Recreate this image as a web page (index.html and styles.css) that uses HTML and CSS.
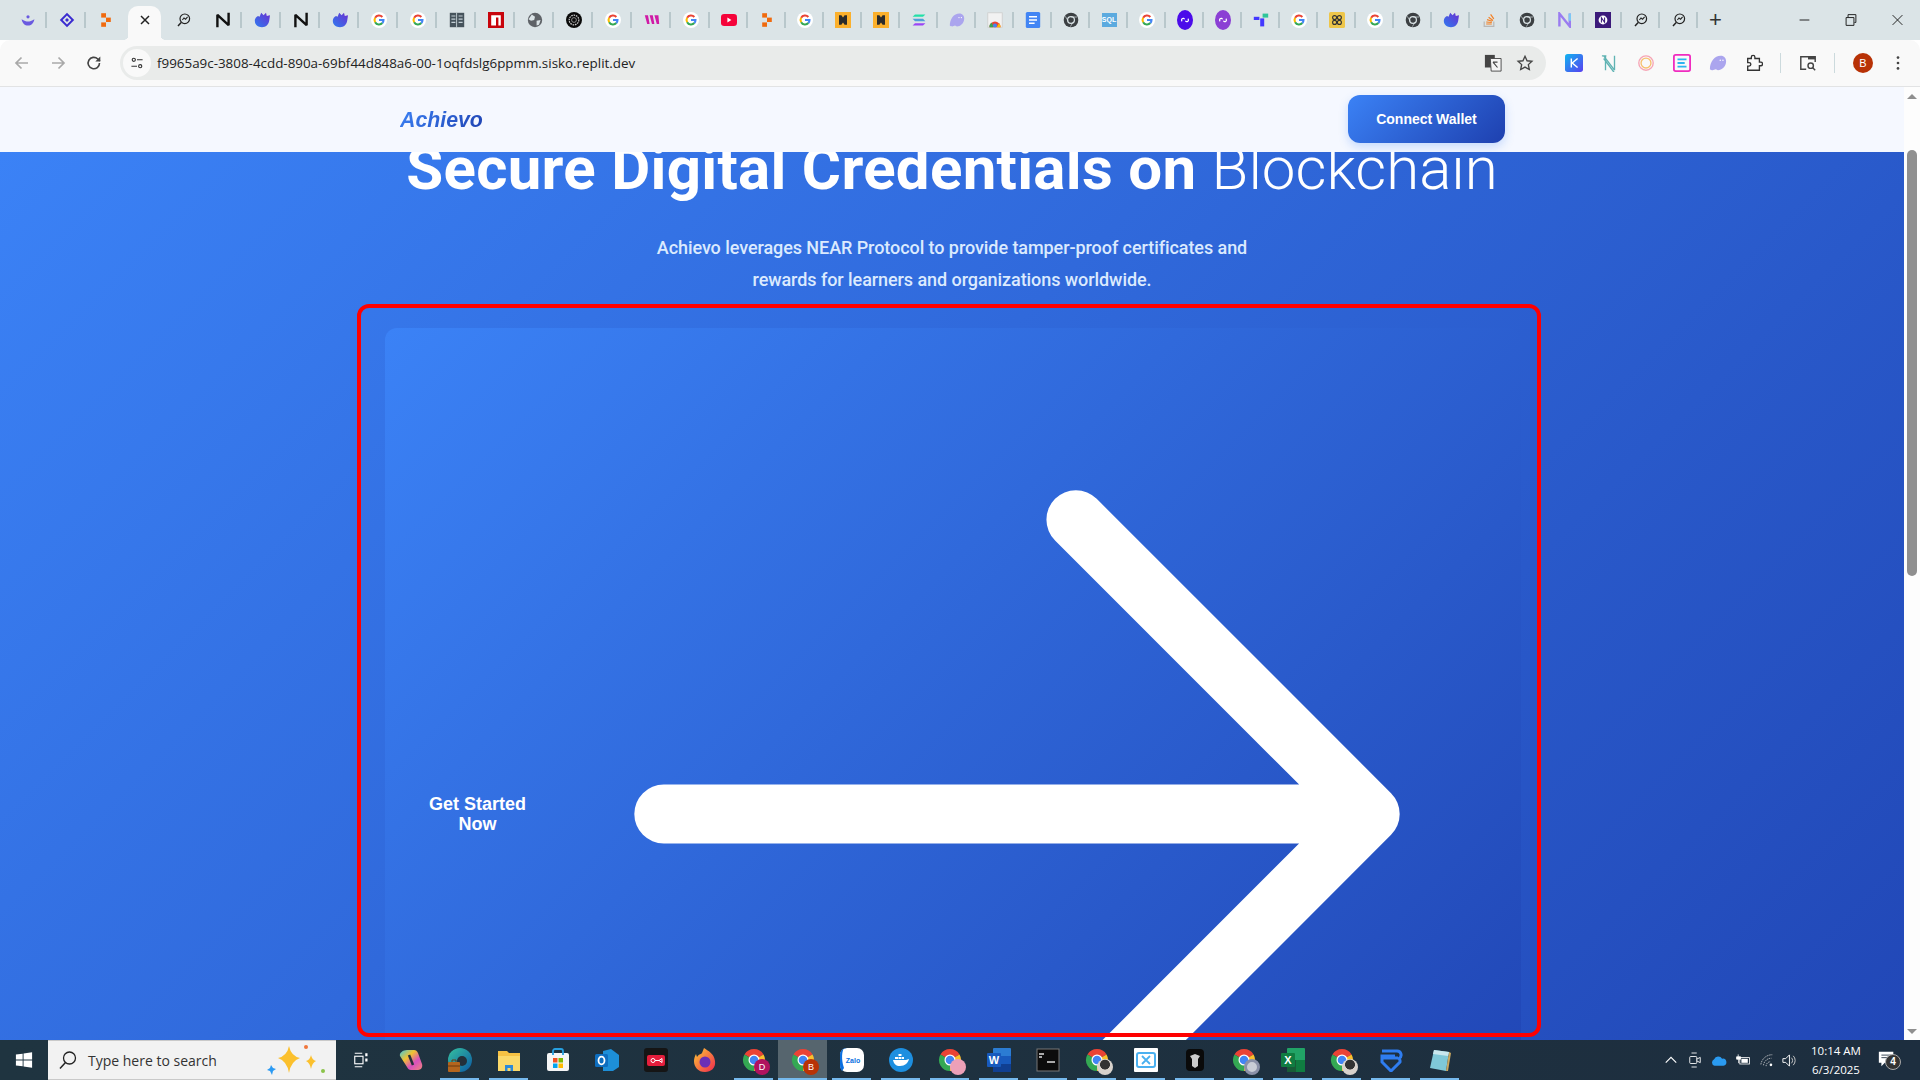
FILE: index.html
```html
<!DOCTYPE html>
<html lang="en">
<head>
    <meta charset="UTF-8">
    <title>Achievo</title>
    <link rel="stylesheet" href="styles.css">
</head>
<body>
<svg class="defs" width="0" height="0">
    <symbol id="g" viewBox="0 0 20 20">
        <circle cx="10" cy="10" r="10" fill="#fff"/>
        <path d="M14.2 6.2A5.6 5.6 0 0 0 5.2 7.2" fill="none" stroke="#ea4335" stroke-width="2.6"/>
        <path d="M5.2 7.2a5.6 5.6 0 0 0 0 5.6" fill="none" stroke="#fbbc05" stroke-width="2.6"/>
        <path d="M5.2 12.8a5.6 5.6 0 0 0 9 1" fill="none" stroke="#34a853" stroke-width="2.6"/>
        <path d="M14.2 13.8a5.6 5.6 0 0 0 1.4-3.8H10" fill="none" stroke="#4285f4" stroke-width="2.6"/>
    </symbol>
    <symbol id="near" viewBox="0 0 20 20">
        <path d="M3 19V3.500L17 16.500V1" fill="none" stroke="#111" stroke-width="3" stroke-linejoin="bevel"/>
    </symbol>
    <symbol id="comet" viewBox="0 0 20 20">
        <defs><linearGradient id="cometfill" x1="0" y1="1" x2="1" y2="0"><stop offset="0" stop-color="#2f7bf0"/><stop offset="1" stop-color="#6a2fd0"/></linearGradient></defs>
        <path d="M1 11c0-3 2-5 4-6l2 1 2-5 3 3 3-3 1 4 4-1-1 7c-1 5-4 8-9 8s-9-3-9-8z" fill="url(#cometfill)"/>
    </symbol>
    <symbol id="scan" viewBox="0 0 20 20">
        <circle cx="11" cy="8.500" r="6" fill="none" stroke="#222" stroke-width="1.500"/>
        <path d="M6.500 13L2.500 17.500" stroke="#222" stroke-width="1.800"/>
        <path d="M8 10l2-2.500 2 1.500 2.500-3" fill="none" stroke="#222" stroke-width="1.300"/>
    </symbol>
    <symbol id="fragment" viewBox="0 0 20 20">
        <rect x="4" y="1.500" width="6" height="5.500" fill="#f06a0e"/>
        <rect x="10" y="7" width="6" height="5.500" fill="#f06a0e"/>
        <rect x="4" y="13" width="6" height="5.500" fill="#f06a0e"/>
    </symbol>
    <symbol id="moo" viewBox="0 0 20 20">
        <rect width="20" height="20" fill="#fbb02c"/>
        <path d="M5 4h3l2 3 2-3h3v12h-3l-2-3-2 3H5z" fill="#2b2b2b"/>
    </symbol>
    <symbol id="ghost" viewBox="0 0 20 20">
        <path d="M1 17c0-8 5-15 12-15 4 0 6 3 6 6 0 6-5 10-9 10-1 0-1.500-1-2.500-1S5 18 4 18s-2 0-3-1z" fill="#aba5ee"/>
        <circle cx="12.500" cy="7" r=".8" fill="#fff"/><circle cx="15.500" cy="7" r=".8" fill="#fff"/>
    </symbol>
    <symbol id="chromedark" viewBox="0 0 24 24">
        <circle cx="12" cy="12" r="11" fill="#3c4043"/>
        <circle cx="12" cy="12" r="6" fill="#dbe4e7"/>
        <circle cx="12" cy="12" r="4.200" fill="#3c4043"/>
        <path d="M12 7.500h9M8 14L3.500 6.500M15.500 14.500L11 22" stroke="#dbe4e7" stroke-width="1"/>
    </symbol>
    <symbol id="chrome" viewBox="0 0 24 24">
        <path d="M12 12L2.470 6.500A11 11 0 0 1 21.530 6.500Z" fill="#ea4335"/>
        <path d="M12 12L21.530 6.500A11 11 0 0 1 12 23Z" fill="#fbc02d"/>
        <path d="M12 12V23A11 11 0 0 1 2.470 6.500Z" fill="#34a853"/>
        <circle cx="12" cy="12" r="5.500" fill="#fff"/>
        <circle cx="12" cy="12" r="4.300" fill="#4285f4"/>
    </symbol>
    <symbol id="polygon" viewBox="0 0 20 20">
        <path d="M6.500 11.500a2 2 0 1 1 3-2.500M13.500 8.500a2 2 0 1 1-3 2.500" fill="none" stroke="#fff" stroke-width="1.500"/>
    </symbol>
</svg>

<div class="browser">
    <div class="tabstrip">
        <div class="tab"><svg viewBox="0 0 20 20"><path d="M2 9c3 2 6 3 8 3s5-1 8-3c-1 5-4 8-8 8s-7-3-8-8z" fill="#6a5ae0"/><circle cx="10" cy="6" r="2" fill="#6a5ae0"/></svg></div>
        <div class="tab"><svg viewBox="0 0 20 20"><path d="M10 1l9 9-9 9-9-9z M10 4.500L4.500 10l5.500 5.500 5.500-5.500z M10 7.500l2.500 2.500-2.500 2.500L7.500 10z" fill="#3a2bd0" fill-rule="evenodd"/></svg></div>
        <div class="tab tab-plain"><svg><use href="#fragment"/></svg></div>
        <div class="tab tab-active"><svg viewBox="0 0 20 20"><path d="M5 5l10 10M15 5L5 15" stroke="#222" stroke-width="1.800"/></svg></div>
        <div class="tab tab-plain"><svg><use href="#scan"/></svg></div>
        <div class="tab"><svg><use href="#near"/></svg></div>
        <div class="tab"><svg><use href="#comet"/></svg></div>
        <div class="tab"><svg><use href="#near"/></svg></div>
        <div class="tab"><svg><use href="#comet"/></svg></div>
        <div class="tab"><svg><use href="#g"/></svg></div>
        <div class="tab"><svg><use href="#g"/></svg></div>
        <div class="tab"><svg viewBox="0 0 20 20"><rect x="1" y="1" width="18" height="18" fill="#46535c"/><path d="M9.500 1v18" stroke="#dbe4e7"/><path d="M3 5h5M3 9h5M3 13h5M12 5h5M12 9h5M12 13h5" stroke="#c4d0d6" stroke-width="1.500"/></svg></div>
        <div class="tab"><svg viewBox="0 0 20 20"><rect width="20" height="20" fill="#c8040c"/><path d="M4 17V4h12v13h-3V7h-3v10z" fill="#fff"/></svg></div>
        <div class="tab"><svg viewBox="0 0 20 20"><circle cx="10" cy="10" r="9" fill="#5f6368"/><path d="M6 3l4 3-1 4-4 1-3-2zM12 11l5-1-2 6-3 1z" fill="#dbe4e7"/></svg></div>
        <div class="tab"><svg viewBox="0 0 20 20"><circle cx="10" cy="10" r="10" fill="#0a0a0a"/><circle cx="10" cy="10" r="6" fill="none" stroke="#ccc" stroke-width="1.500" stroke-dasharray="2 1"/><circle cx="10" cy="10" r="3" fill="none" stroke="#aaa"/></svg></div>
        <div class="tab"><svg><use href="#g"/></svg></div>
        <div class="tab"><svg viewBox="0 0 20 20"><path d="M1 4h4l2 11H4zM7 4h4l2 11h-3zM13 4h5l1 11h-3z" fill="#d01aa6"/></svg></div>
        <div class="tab"><svg><use href="#g"/></svg></div>
        <div class="tab tab-narrow"><svg viewBox="0 0 20 20"><rect y="2.500" width="20" height="15" rx="4" fill="#f5033a"/><path d="M8 7l5 3-5 3z" fill="#fff"/></svg></div>
        <div class="tab tab-narrow"><svg><use href="#fragment"/></svg></div>
        <div class="tab tab-narrow"><svg><use href="#g"/></svg></div>
        <div class="tab tab-narrow"><svg><use href="#moo"/></svg></div>
        <div class="tab tab-narrow"><svg><use href="#moo"/></svg></div>
        <div class="tab tab-narrow"><svg viewBox="0 0 20 20"><path d="M5 3h13l-3 3H2z" fill="#22e0a8"/><path d="M2 8.500h13l3 3H5z" fill="#4f9fd8"/><path d="M5 14h13l-3 3H2z" fill="#9a45f5"/></svg></div>
        <div class="tab tab-narrow"><svg><use href="#ghost"/></svg></div>
        <div class="tab tab-narrow"><svg viewBox="0 0 20 20"><rect x="1" y="1" width="18" height="18" fill="#f2f2f2" stroke="#ccc"/><path d="M3 19a7 7 0 0 1 14 0z" fill="#ea4335"/><path d="M3 19a7 7 0 0 1 3-6l2 6z" fill="#34a853"/><path d="M17 19a7 7 0 0 0-2-5l-3 5z" fill="#fbbc05"/><circle cx="10" cy="17" r="2.500" fill="#4285f4"/></svg></div>
        <div class="tab tab-narrow"><svg viewBox="0 0 20 20"><rect x="1" width="18" height="20" rx="2" fill="#4285f4"/><path d="M5 6h10M5 10h10M5 14h7" stroke="#fff" stroke-width="1.800"/></svg></div>
        <div class="tab tab-narrow"><svg><use href="#chromedark"/></svg></div>
        <div class="tab tab-narrow"><div class="sql-badge">SQL</div></div>
        <div class="tab tab-narrow"><svg><use href="#g"/></svg></div>
        <div class="tab tab-narrow"><span class="favicon-round fav-indigo"><svg><use href="#polygon"/></svg></span></div>
        <div class="tab tab-narrow"><span class="favicon-round fav-violet"><svg><use href="#polygon"/></svg></span></div>
        <div class="tab tab-narrow"><svg viewBox="0 0 20 20"><rect x="1" y="6" width="7" height="4" fill="#4338ff"/><rect x="12" y="2" width="7" height="5" fill="#2ec59a"/><rect x="9" y="8" width="5" height="10" fill="#4338ff"/></svg></div>
        <div class="tab tab-narrow"><svg><use href="#g"/></svg></div>
        <div class="tab tab-narrow"><svg viewBox="0 0 20 20"><rect width="20" height="20" rx="2" fill="#eec64a"/><circle cx="7" cy="7" r="2.500" fill="none" stroke="#333" stroke-width="1.400"/><circle cx="13" cy="7" r="2.500" fill="none" stroke="#333" stroke-width="1.400"/><circle cx="7" cy="13" r="2.500" fill="none" stroke="#333" stroke-width="1.400"/><circle cx="13" cy="13" r="2.500" fill="none" stroke="#333" stroke-width="1.400"/></svg></div>
        <div class="tab tab-narrow"><svg><use href="#g"/></svg></div>
        <div class="tab tab-narrow"><svg><use href="#chromedark"/></svg></div>
        <div class="tab tab-narrow"><svg><use href="#comet"/></svg></div>
        <div class="tab tab-narrow"><svg viewBox="0 0 20 20"><path d="M4 12v6h12v-6" fill="none" stroke="#b9b7b5" stroke-width="1.500"/><path d="M6.500 15h7M6.500 12.500l7 .6M7.500 9.500l6.500 2M9.500 6.500l5.500 4M12 3l4 5.500" stroke="#f48024" stroke-width="1.500"/></svg></div>
        <div class="tab tab-narrow"><svg><use href="#chromedark"/></svg></div>
        <div class="tab tab-narrow"><svg viewBox="0 0 20 20"><path d="M3 18V2l13 16V2" fill="none" stroke="#9a7cf0" stroke-width="3"/><path d="M16 2v9" stroke="#7cc8f5" stroke-width="3"/></svg></div>
        <div class="tab tab-narrow"><svg viewBox="0 0 20 20"><rect width="20" height="20" fill="#3b1a7a"/><circle cx="10" cy="10" r="5.500" fill="#fff"/><path d="M8 13V7l4 6V7" fill="none" stroke="#3b1a7a" stroke-width="1.300"/></svg></div>
        <div class="tab tab-narrow"><svg><use href="#scan"/></svg></div>
        <div class="tab tab-narrow"><svg><use href="#scan"/></svg></div>
        <div class="new-tab">+</div>
        <div class="window-controls">
            <svg viewBox="0 0 48 40"><path d="M20 20h10" stroke="#222"/></svg>
            <svg viewBox="0 0 48 40"><path d="M19.500 17.500h8v8h-8zM21.500 17v-2.500h8v8H28" fill="none" stroke="#222"/></svg>
            <svg viewBox="0 0 48 40"><path d="M19 15l10 10M29 15L19 25" stroke="#222"/></svg>
        </div>
    </div>

    <div class="toolbar">
        <svg class="tool" viewBox="0 0 20 20"><path d="M16 10H4.500M9.500 4.500L4 10l5.500 5.500" fill="none" stroke="#a9a9a9" stroke-width="1.700"/></svg>
        <svg class="tool" viewBox="0 0 20 20"><path d="M4 10h11.500M10.500 4.500L16 10l-5.500 5.500" fill="none" stroke="#a9a9a9" stroke-width="1.700"/></svg>
        <svg class="tool" viewBox="0 0 20 20"><path d="M15.500 10a5.700 5.700 0 1 1-1.700-4L16 8" fill="none" stroke="#444" stroke-width="1.600"/><path d="M16.300 3.500v5h-5z" fill="#444"/></svg>
        <div class="omnibox">
            <span class="site-info"><svg viewBox="0 0 20 20"><circle cx="6" cy="6" r="2" fill="none" stroke="#333" stroke-width="1.400"/><path d="M10 6h7M3 14h7" stroke="#333" stroke-width="1.400"/><circle cx="14" cy="14" r="2" fill="none" stroke="#333" stroke-width="1.400"/></svg></span>
            <span class="url">f9965a9c-3808-4cdd-890a-69bf44d848a6-00-1oqfdslg6ppmm.sisko.replit.dev</span>
            <svg class="omni-icon" viewBox="0 0 20 20"><rect x="1" y="1" width="11" height="14" fill="#444"/><path d="M7 5h12v14H8z" fill="#f4f4f4" stroke="#444"/><path d="M10 9l5 6M15 9h-5" stroke="#444" stroke-width="1.300"/></svg>
            <svg class="omni-icon" viewBox="0 0 20 20"><path d="M10 2.500l2.300 5 5.400.6-4 3.700 1.100 5.400L10 14.500l-4.800 2.700 1.100-5.400-4-3.700 5.400-.6z" fill="none" stroke="#444" stroke-width="1.500"/></svg>
        </div>
        <div class="ext-row">
            <svg class="ext" viewBox="0 0 20 20"><defs><linearGradient id="kfill" x1="0" y1="0" x2="1" y2="1"><stop offset="0" stop-color="#0fb5f0"/><stop offset="1" stop-color="#5a3ff0"/></linearGradient></defs><rect width="20" height="20" rx="3" fill="url(#kfill)"/><path d="M7 5v10M14 5l-6 5 6 5" fill="none" stroke="#fff" stroke-width="1.600"/></svg>
            <svg class="ext" viewBox="0 0 20 20"><path d="M3 2l12 16M5 2v16M15 2v16M1 2h5M3 5l12 16" fill="none" stroke="#5fb3b3" stroke-width="1.500"/></svg>
            <svg class="ext" viewBox="0 0 20 20"><circle cx="10" cy="10" r="8" fill="none" stroke="#f6a5b5" stroke-width="1.500"/><circle cx="10" cy="10" r="5.500" fill="none" stroke="#f7c06f" stroke-width="1.500"/></svg>
            <svg class="ext" viewBox="0 0 20 20"><rect x="1" y="1" width="18" height="18" rx="2" fill="none" stroke="#f02cc0" stroke-width="2"/><path d="M5 6h10M5 10h8M5 14h10" stroke="#2cb5f0" stroke-width="2"/></svg>
            <svg class="ext"><use href="#ghost"/></svg>
            <svg class="ext" viewBox="0 0 20 20"><path d="M3 5h4V3.500a2 2 0 0 1 4 0V5h5v4h1.500a2 2 0 0 1 0 4H16v5H3v-4.500h1.500a2 2 0 0 0 0-4H3z" fill="none" stroke="#333" stroke-width="1.500"/></svg>
            <span class="tool-sep"></span>
            <svg class="ext" viewBox="0 0 20 20"><path d="M8 17H2V3h16v6" fill="none" stroke="#444" stroke-width="1.600"/><path d="M10 3h8v3h-8z" fill="#444"/><circle cx="13" cy="13" r="3" fill="none" stroke="#444" stroke-width="1.600"/><path d="M15 15l3 3" stroke="#444" stroke-width="1.600"/></svg>
            <span class="tool-sep"></span>
            <span class="avatar">B</span>
            <svg class="ext" viewBox="0 0 20 20"><circle cx="10" cy="4" r="1.500" fill="#444"/><circle cx="10" cy="10" r="1.500" fill="#444"/><circle cx="10" cy="16" r="1.500" fill="#444"/></svg>
        </div>
    </div>

    <div class="viewport">
        <div class="page">
            <nav class="navbar">
                <div class="logo">Achievo</div>
                <button class="connect-btn">Connect Wallet</button>
            </nav>
            <section class="hero">
                <h1>Secure Digital Credentials on <span class="thin">Blockchain</span></h1>
                <p>Achievo leverages NEAR Protocol to provide tamper-proof certificates and<br>rewards for learners and organizations worldwide.</p>
                <a class="cta">
                    <span class="cta-label">Get Started Now</span>
                    <svg class="cta-arrow" viewBox="0 0 24 24"><path d="M13.500 4.500L21 12m0 0l-7.500 7.500M21 12H3" fill="none" stroke="#fff" stroke-width="1.500" stroke-linecap="round" stroke-linejoin="round"/></svg>
                </a>
                <div class="red-outline"></div>
            </section>
        </div>
        <div class="scrollbar">
            <span class="arrow-up"></span>
            <span class="thumb"></span>
            <span class="arrow-down"></span>
        </div>
    </div>

    <div class="taskbar">
        <div class="start"><svg viewBox="0 0 20 20"><path d="M1 4l7.500-1v6.500H1zM9.500 2.800L19 1.500v8h-9.500zM1 10.500h7.500V17L1 16zM9.500 10.500H19v8L9.500 17.200z" fill="#fff"/></svg></div>
        <div class="search">
            <svg viewBox="0 0 20 20"><circle cx="11.500" cy="8" r="6" fill="none" stroke="#222" stroke-width="1.300"/><path d="M7.500 12.500L2 18.500" stroke="#222" stroke-width="1.500"/></svg>
            <span>Type here to search</span>
            <svg class="sparkle" viewBox="0 0 64 36"><path d="M24 4q2 10 11 12-9 3-11 15-2-12-11-15 9-2 11-12z" fill="#fbc02d"/><path d="M46 13q1 5 5 6-4 2-5 8-1-6-5-8 4-1 5-6z" fill="#fbc02d"/><path d="M6 23l2 3 3 1-3 2-1 4-2-4-3-1 3-2z" fill="#2b9af3"/><circle cx="41" cy="5" r="2" fill="#f0763c"/><circle cx="58" cy="29" r="2" fill="#8bc34a"/></svg>
        </div>
        <div class="task-view"><svg viewBox="0 0 24 24"><path d="M5 3h10M5 21h10" stroke="#fff" stroke-width="1.500"/><rect x="5" y="7" width="11" height="10" fill="none" stroke="#fff" stroke-width="1.500"/><rect x="19" y="10" width="3" height="4" fill="#fff"/><rect x="19" y="3" width="3" height="4" fill="#fff"/></svg></div>
        <div class="task-icons">
            <div class="app"><svg viewBox="0 0 24 24"><defs><linearGradient id="copilot" x1="0" y1="0" x2="1" y2="1"><stop offset="0" stop-color="#3ec8e0"/><stop offset=".35" stop-color="#f2c230"/><stop offset=".65" stop-color="#d84fc0"/><stop offset="1" stop-color="#f0867a"/></linearGradient></defs><path d="M8 2h7c2 0 3 1 4 3l4 11c1 3-1 6-4 6h-7c-2 0-3-1-4-3L1 8c-1-3 3-6 7-6z" fill="url(#copilot)"/><path d="M10 7l4 10" stroke="#23303a" stroke-width="2.500"/></svg></div>
            <div class="app running"><svg viewBox="0 0 24 24"><defs><linearGradient id="edge" x1="0" y1="0" x2="1" y2="1"><stop offset="0" stop-color="#35c1a0"/><stop offset="1" stop-color="#0c59a4"/></linearGradient></defs><circle cx="12" cy="12" r="12" fill="url(#edge)"/><circle cx="14" cy="13" r="5" fill="#23303a"/><rect x="0" y="14" width="12" height="10" rx="1" fill="#b5651d"/><path d="M4 14v-2h4v2M0 18h12" stroke="#6b3a10" stroke-width="1" fill="none"/></svg></div>
            <div class="app running"><svg viewBox="0 0 24 24"><path d="M1 3h9l2 2h11v18H1z" fill="#f6c244"/><path d="M1 8h22v15H1z" fill="#fbd96a"/><path d="M8 23v-6h8v6h-2.500v-3h-3v3z" fill="#2e8ad8"/></svg></div>
            <div class="app"><svg viewBox="0 0 24 24"><rect x="1" y="5" width="22" height="18" rx="2" fill="#f5f5f5"/><path d="M7 7V3a2 2 0 0 1 2-2h6a2 2 0 0 1 2 2v4" fill="none" stroke="#27a0e0" stroke-width="1.800"/><rect x="7" y="10" width="4.500" height="4.500" fill="#f25022"/><rect x="12.500" y="10" width="4.500" height="4.500" fill="#7fba00"/><rect x="7" y="15.500" width="4.500" height="4.500" fill="#00a4ef"/><rect x="12.500" y="15.500" width="4.500" height="4.500" fill="#ffb900"/></svg></div>
            <div class="app"><svg viewBox="0 0 24 24"><path d="M8 3l8-2 8 6v12l-6 4H8z" fill="#1d8fd8"/><rect x="0" y="6" width="13" height="13" rx="1.500" fill="#0e6ebf"/><ellipse cx="6.500" cy="12.500" rx="3" ry="3.800" fill="none" stroke="#fff" stroke-width="1.800"/></svg></div>
            <div class="app"><svg viewBox="0 0 24 24"><rect width="24" height="24" rx="3" fill="#151515"/><rect x="3" y="7" width="18" height="11" rx="2" fill="#e51e3c"/><circle cx="9" cy="12.500" r="2" fill="none" stroke="#fff"/><path d="M11 12.500h4l3-2v4l-3-2" fill="none" stroke="#fff"/></svg></div>
            <div class="app"><svg viewBox="0 0 24 24"><defs><linearGradient id="fox" x1="0" y1="0" x2="1" y2="1"><stop offset="0" stop-color="#ffcb32"/><stop offset="1" stop-color="#f0274f"/></linearGradient></defs><path d="M12 24C5 24 1 19 1 13c0-3 1-5 2-7l1 3c1-2 3-3 4-3l1-1 2-5c4 3 10 5 11 13 1 7-4 11-10 11z" fill="url(#fox)"/><circle cx="12" cy="14" r="5.500" fill="#6b2fb5"/></svg></div>
            <div class="app running"><svg><use href="#chrome"/></svg><span class="profile profile-d">D</span></div>
            <div class="app running active"><svg><use href="#chrome"/></svg><span class="profile profile-b">B</span></div>
            <div class="app running"><svg viewBox="0 0 24 24"><rect width="24" height="24" rx="7" fill="#fff"/><path d="M0 7c0-4 3-7 7-7H4C2 3 1 11 4 20l-2 3c-1-1-2-3-2-6z" fill="#0a6fe0"/><text x="13" y="15" class="zalo-text">Zalo</text></svg></div>
            <div class="app running"><svg viewBox="0 0 24 24"><circle cx="12" cy="12" r="12" fill="#1d8fe0"/><path d="M4 12h13c1 0 2-1 3-1-1 4-4 7-9 7-4 0-6-2-7-6z" fill="#fff"/><path d="M6 9h3v2H6zM9.500 9h3v2h-3zM13 9h2v2h-2zM9.500 6h3v2h-3z" fill="#fff"/></svg></div>
            <div class="app running"><svg><use href="#chrome"/></svg><span class="profile profile-pink"></span></div>
            <div class="app running"><svg viewBox="0 0 24 24"><rect x="6" width="18" height="24" rx="1" fill="#2b7cd3"/><rect x="6" y="16" width="18" height="8" fill="#103f91"/><rect x="6" y="8" width="18" height="8" fill="#185abd"/><rect y="5" width="14" height="14" rx="1" fill="#185abd"/><text x="7" y="16" class="office-text">W</text></svg></div>
            <div class="app running"><svg viewBox="0 0 24 24"><rect x="1" y="1" width="22" height="22" fill="#0c0c0c" stroke="#777"/><path d="M3 6h5M3 9h3M11 14h8" stroke="#ddd" stroke-width="1.500"/></svg></div>
            <div class="app running"><svg><use href="#chrome"/></svg><span class="profile profile-photo"></span></div>
            <div class="app running"><svg viewBox="0 0 24 24"><rect width="24" height="24" rx="1" fill="#fff"/><rect x="3" y="5" width="18" height="14" rx="2" fill="none" stroke="#4ab0f0" stroke-width="2"/><path d="M8 8l8 8M16 8l-8 8" stroke="#4ab0f0" stroke-width="1.800"/></svg></div>
            <div class="app running"><svg viewBox="0 0 24 24"><rect x="3" y="1" width="18" height="22" rx="4" fill="#0a0a0a"/><path d="M7 8l5-2 5 2-2 3v7l-3 2-3-2v-7z" fill="#ccc"/></svg></div>
            <div class="app running"><svg><use href="#chrome"/></svg><span class="profile profile-clock"></span></div>
            <div class="app running"><svg viewBox="0 0 24 24"><rect x="6" width="18" height="24" rx="1" fill="#21a366"/><rect x="15" y="12" width="9" height="12" fill="#107c41"/><rect x="6" y="12" width="9" height="12" fill="#185c37"/><rect y="5" width="14" height="14" rx="1" fill="#107c41"/><text x="7" y="16" class="office-text">X</text></svg></div>
            <div class="app running"><svg><use href="#chrome"/></svg><span class="profile profile-photo"></span></div>
            <div class="app running"><svg viewBox="0 0 24 24"><path d="M3 3h15a4 4 0 0 1 2 7.500 4 4 0 0 1 1 3.500L12 23 3 14V8h13" fill="none" stroke="#2f7df0" stroke-width="3"/><path d="M3 10h16" stroke="#2f7df0" stroke-width="3"/></svg></div>
            <div class="app running"><svg viewBox="0 0 24 24"><path d="M6 2l15 2-3 19-16-3z" fill="#7fc8d8"/><path d="M21 4l2 1-3 18h-2z" fill="#caa860"/><path d="M6 2l15 2-1 4L5 6z" fill="#c9e7ee"/></svg></div>
        </div>
        <div class="tray">
            <svg class="tray-icon tray-chevron" viewBox="0 0 16 16"><path d="M2 11l6-6 6 6" fill="none" stroke="#fff" stroke-width="1.300"/></svg>
            <svg class="tray-icon tray-cam" viewBox="0 0 16 20"><rect x="2" y="6" width="8" height="8" rx="1" fill="none" stroke="#fff"/><path d="M10 9l4-2v6l-4-2M4 2h6M4 18h6" fill="none" stroke="#fff"/></svg>
            <svg class="tray-icon tray-cloud" viewBox="0 0 18 12"><path d="M4 12a4 4 0 0 1-.5-7.500A5 5 0 0 1 12.500 4 4 4 0 0 1 14 12z" fill="#2a9af0"/></svg>
            <svg class="tray-icon tray-batt" viewBox="0 0 20 16"><path d="M4 1v3M2 4h5v3H2zM4.500 7v5" stroke="#fff" fill="#fff"/><rect x="6" y="5" width="12" height="8" fill="none" stroke="#fff"/><rect x="8" y="6.500" width="8" height="5" fill="#fff"/></svg>
            <svg class="tray-icon tray-wifi" viewBox="0 0 16 16"><path d="M1 13a13 13 0 0 1 13-11M4 14a9 9 0 0 1 9-8M7 15a5 5 0 0 1 5-5" fill="none" stroke="#ddd" stroke-dasharray="1.500 1"/><circle cx="12.500" cy="13.500" r="1.500" fill="#fff"/></svg>
            <svg class="tray-icon tray-vol" viewBox="0 0 16 16"><path d="M2 6h3l4-4v12l-4-4H2z" fill="none" stroke="#fff"/><path d="M11 5a4 4 0 0 1 0 6M13 3a7 7 0 0 1 0 10" fill="none" stroke="#ccc"/></svg>
            <div class="clock"><span>10:14 AM</span><span>6/3/2025</span></div>
            <div class="notify">
                <svg viewBox="0 0 20 20"><path d="M1 2h17v13H8l-4 4v-4H1z" fill="#fff"/><path d="M4 6h11M4 9h11" stroke="#1c2c3c"/></svg>
                <span class="notify-count">4</span>
            </div>
        </div>
    </div>
</div>
</body>
</html>
```

FILE: styles.css
```css
* {
    box-sizing: border-box;
}

body {
    margin: 0;
    font-family: "Liberation Sans", Arial, sans-serif;
    overflow: hidden;
}

.defs {
    position: absolute;
}

.browser {
    width: 1920px;
    height: 1080px;
    display: flex;
    flex-direction: column;
    overflow: hidden;
}

/* tab strip */
.tabstrip {
    height: 40px;
    flex: none;
    display: flex;
    align-items: center;
    padding-left: 8px;
    background-color: #dbe4e7;
}

.tab {
    position: relative;
    width: 39px;
    height: 40px;
    flex: none;
    display: flex;
    align-items: center;
    justify-content: center;
}

.tab-narrow {
    width: 38px;
}

.tab::after {
    content: "";
    position: absolute;
    right: 0;
    top: 12px;
    width: 2px;
    height: 16px;
    background-color: #b8c7cb;
}

.tab-active::after,
.tab-plain::after {
    display: none;
}

.tab svg {
    width: 16px;
    height: 16px;
}

.tab-active {
    height: 34px;
    width: 33px;
    margin: 6px 3px 0;
    padding-bottom: 6px;
    background-color: #f9f9f9;
    border-radius: 10px 10px 0 0;
}

.tab-active::before {
    content: "";
    position: absolute;
    left: -6px;
    right: -6px;
    bottom: 0;
    height: 8px;
    background: radial-gradient(circle at 0 0, #dbe4e7 8px, #f9f9f9 8.5px) left / 6px 8px no-repeat,
                radial-gradient(circle at 100% 0, #dbe4e7 8px, #f9f9f9 8.5px) right / 6px 8px no-repeat;
}

.sql-badge {
    width: 15px;
    height: 14px;
    font-size: 7px;
    font-weight: bold;
    line-height: 14px;
    text-align: center;
    color: #fff;
    background-color: #5baadf;
}

.favicon-round {
    width: 16px;
    height: 20px;
    border-radius: 50%;
    display: flex;
    align-items: center;
    justify-content: center;
}

.fav-indigo {
    background-color: #4b0bea;
}

.fav-violet {
    background-color: #8b3fd4;
}

.new-tab {
    width: 35px;
    text-align: center;
    font-size: 22px;
    line-height: 40px;
    color: #333;
}

.window-controls {
    margin-left: auto;
    margin-right: -1px;
    display: flex;
}

.window-controls svg {
    width: 47px;
    height: 40px;
}

/* toolbar */
.toolbar {
    height: 47px;
    flex: none;
    display: flex;
    align-items: center;
    padding: 0 0 1px 4px;
    background-color: #f9f9f9;
    border-bottom: 1px solid #e2e3e4;
    border-radius: 10px 10px 0 0;
}

.tool {
    width: 20px;
    height: 20px;
    margin: 0 8px;
    flex: none;
}

.omnibox {
    width: 1426px;
    height: 34px;
    margin-left: 8px;
    flex: none;
    display: flex;
    align-items: center;
    padding: 0 12px 0 3px;
    border-radius: 17px;
    background-color: #e9ebea;
}

.site-info {
    width: 28px;
    height: 28px;
    border-radius: 50%;
    background-color: #f9f9f9;
    display: flex;
    align-items: center;
    justify-content: center;
}

.site-info svg {
    width: 16px;
    height: 16px;
}

.url {
    margin-left: 6px;
    flex: 1;
    font-family: "Open Sans", sans-serif;
    font-size: 13.4px;
    color: #222;
}

.omni-icon {
    width: 18px;
    height: 18px;
    margin-left: 14px;
}

.ext-row {
    display: flex;
    align-items: center;
    margin-left: 19px;
}

.ext {
    width: 18px;
    height: 18px;
    margin-right: 18px;
    flex: none;
}

.tool-sep {
    width: 1px;
    height: 20px;
    margin-right: 18px;
    margin-left: -1px;
    background-color: #ccdadd;
}

.avatar {
    width: 20px;
    height: 20px;
    margin-right: 16px;
    border-radius: 50%;
    background-color: #b83206;
    color: #fff;
    font-size: 11px;
    line-height: 20px;
    text-align: center;
}

/* page */
.viewport {
    flex: 1;
    min-height: 0;
    display: flex;
}

.page {
    flex: 1;
    min-width: 0;
    display: flex;
    flex-direction: column;
}

.navbar {
    height: 65px;
    flex: none;
    display: flex;
    align-items: center;
    justify-content: space-between;
    padding: 0 399px 0 400px;
    background-color: #f5f8ff;
}

.logo {
    margin-top: 1px;
    font-size: 21.3px;
    font-weight: bold;
    font-style: italic;
    background: linear-gradient(135deg, #3b82f6, #1e40af);
    -webkit-background-clip: text;
    background-clip: text;
    color: transparent;
}

.connect-btn {
    width: 157px;
    height: 48px;
    margin-bottom: 1px;
    border: 0;
    border-radius: 12px;
    font-family: "Liberation Sans", Arial, sans-serif;
    font-size: 14px;
    font-weight: bold;
    color: #fff;
    background: linear-gradient(135deg, #3b82f6, #1e40af);
    box-shadow: 0 4px 10px rgba(59, 130, 246, 0.25);
}

.hero {
    position: relative;
    flex: 1;
    min-height: 0;
    overflow: hidden;
    display: flex;
    flex-direction: column;
    align-items: center;
    background: linear-gradient(135deg, #3b82f6, #1e40af 112%);
    color: #fff;
}

.hero h1 {
    margin: -16px 0 0;
    font-family: Roboto, sans-serif;
    font-size: 60px;
    line-height: 66px;
    font-weight: 700;
    letter-spacing: 0.3px;
    white-space: nowrap;
}

.thin {
    font-weight: 300;
    letter-spacing: 0;
}

.hero p {
    margin: 30px 0 0;
    font-family: Roboto, sans-serif;
    font-size: 18px;
    line-height: 32px;
    font-weight: 500;
    letter-spacing: -0.07px;
    text-align: center;
    color: #dbeafe;
}

.cta {
    width: 1136px;
    flex: none;
    margin: 32px 0 0 2px;
    padding: 15px 32px;
    display: flex;
    align-items: center;
    gap: 8px;
    border-radius: 12px;
    background: linear-gradient(135deg, #3b82f6, #1e40af);
}

.cta-label {
    width: 121px;
    flex: none;
    font-size: 18px;
    line-height: 20px;
    font-weight: bold;
    text-align: center;
    color: #fff;
}

.cta-arrow {
    width: 942px;
    height: 942px;
    flex: none;
}

.red-outline {
    position: absolute;
    left: 357px;
    top: 152px;
    width: 1184px;
    height: 733px;
    border: 4px solid #ff0000;
    border-radius: 12px;
}

.scrollbar {
    width: 16px;
    flex: none;
    position: relative;
    background-color: #fdfdfd;
}

.thumb {
    position: absolute;
    left: 3px;
    top: 63px;
    width: 10px;
    height: 426px;
    border-radius: 5px;
    background-color: #8f8f8f;
}

.arrow-up,
.arrow-down {
    position: absolute;
    left: 3px;
    width: 0;
    height: 0;
    border-left: 5px solid transparent;
    border-right: 5px solid transparent;
}

.arrow-up {
    top: 7px;
    border-bottom: 5px solid #8f8f8f;
}

.arrow-down {
    bottom: 6px;
    border-top: 5px solid #8f8f8f;
}

/* windows taskbar */
.taskbar {
    height: 40px;
    flex: none;
    display: flex;
    background: linear-gradient(90deg, #1f3440, #1d2e3f);
}

.start {
    width: 48px;
    display: flex;
    align-items: center;
    justify-content: center;
}

.start svg {
    width: 18px;
    height: 18px;
}

.search {
    width: 288px;
    display: flex;
    align-items: center;
    padding-left: 10px;
    background-color: #f2f2f2;
    border: 1px solid #c9c9c9;
    border-width: 1px 0;
    font-family: "Open Sans", sans-serif;
    font-size: 14px;
    color: #333;
}

.search svg {
    width: 20px;
    height: 20px;
    margin-right: 10px;
}

.search .sparkle {
    width: 64px;
    height: 36px;
    margin: 0 7px 0 auto;
}

.task-view {
    width: 47px;
    display: flex;
    align-items: center;
    justify-content: center;
}

.task-view svg {
    width: 18px;
    height: 18px;
}

.task-icons {
    display: flex;
    margin-left: 3px;
}

.app {
    position: relative;
    width: 49px;
    height: 40px;
    display: flex;
    align-items: center;
    justify-content: center;
}

.app svg {
    width: 24px;
    height: 24px;
}

.running::after {
    content: "";
    position: absolute;
    left: 5px;
    right: 5px;
    bottom: 0;
    height: 2px;
    background-color: #76b9ed;
}

.active {
    background-color: #56656e;
}

.active::after {
    left: 0;
    right: 0;
}

.profile {
    position: absolute;
    left: 25px;
    top: 19px;
    width: 16px;
    height: 16px;
    border-radius: 50%;
    color: #fff;
    font-size: 9px;
    line-height: 16px;
    text-align: center;
}

.profile-d {
    background-color: #b0125f;
}

.profile-b {
    background-color: #b83206;
}

.profile-pink {
    background-color: #eda0b8;
}

.profile-photo {
    background: radial-gradient(circle at 50% 35%, #333 35%, #d8d2cc 40%);
}

.profile-clock {
    background-color: #c9ccd6;
    border: 3px solid #8a90a8;
}

.zalo-text {
    font-size: 7px;
    font-weight: bold;
    fill: #0a6fe0;
    text-anchor: middle;
}

.office-text {
    font-size: 11px;
    font-weight: bold;
    fill: #fff;
    text-anchor: middle;
}

.tray {
    margin-left: auto;
    display: flex;
    align-items: center;
    width: 257px;
    color: #fff;
}

.tray-icon {
    flex: none;
}

.tray-chevron {
    width: 14px;
    height: 14px;
    margin-left: 1px;
}

.tray-cam {
    width: 14px;
    height: 20px;
    margin-left: 10px;
}

.tray-cloud {
    width: 16px;
    height: 11px;
    margin-left: 9px;
}

.tray-batt {
    width: 16px;
    height: 14px;
    margin-left: 8px;
}

.tray-wifi {
    width: 14px;
    height: 14px;
    margin-left: 9px;
}

.tray-vol {
    width: 15px;
    height: 15px;
    margin-left: 7px;
}

.clock {
    width: 64px;
    margin-left: 8px;
    display: flex;
    flex-direction: column;
    align-items: center;
    gap: 3px;
    font-family: "Open Sans", sans-serif;
    font-size: 11.5px;
    line-height: 16px;
}

.notify {
    position: relative;
    margin-left: 10px;
    width: 20px;
    height: 20px;
}

.notify svg {
    width: 17px;
    height: 17px;
}

.notify-count {
    position: absolute;
    left: 7px;
    top: 4px;
    width: 16px;
    height: 16px;
    border-radius: 50%;
    border: 1px solid #aaa;
    background-color: #333;
    font-size: 10px;
    font-weight: bold;
    line-height: 14px;
    text-align: center;
}
```
